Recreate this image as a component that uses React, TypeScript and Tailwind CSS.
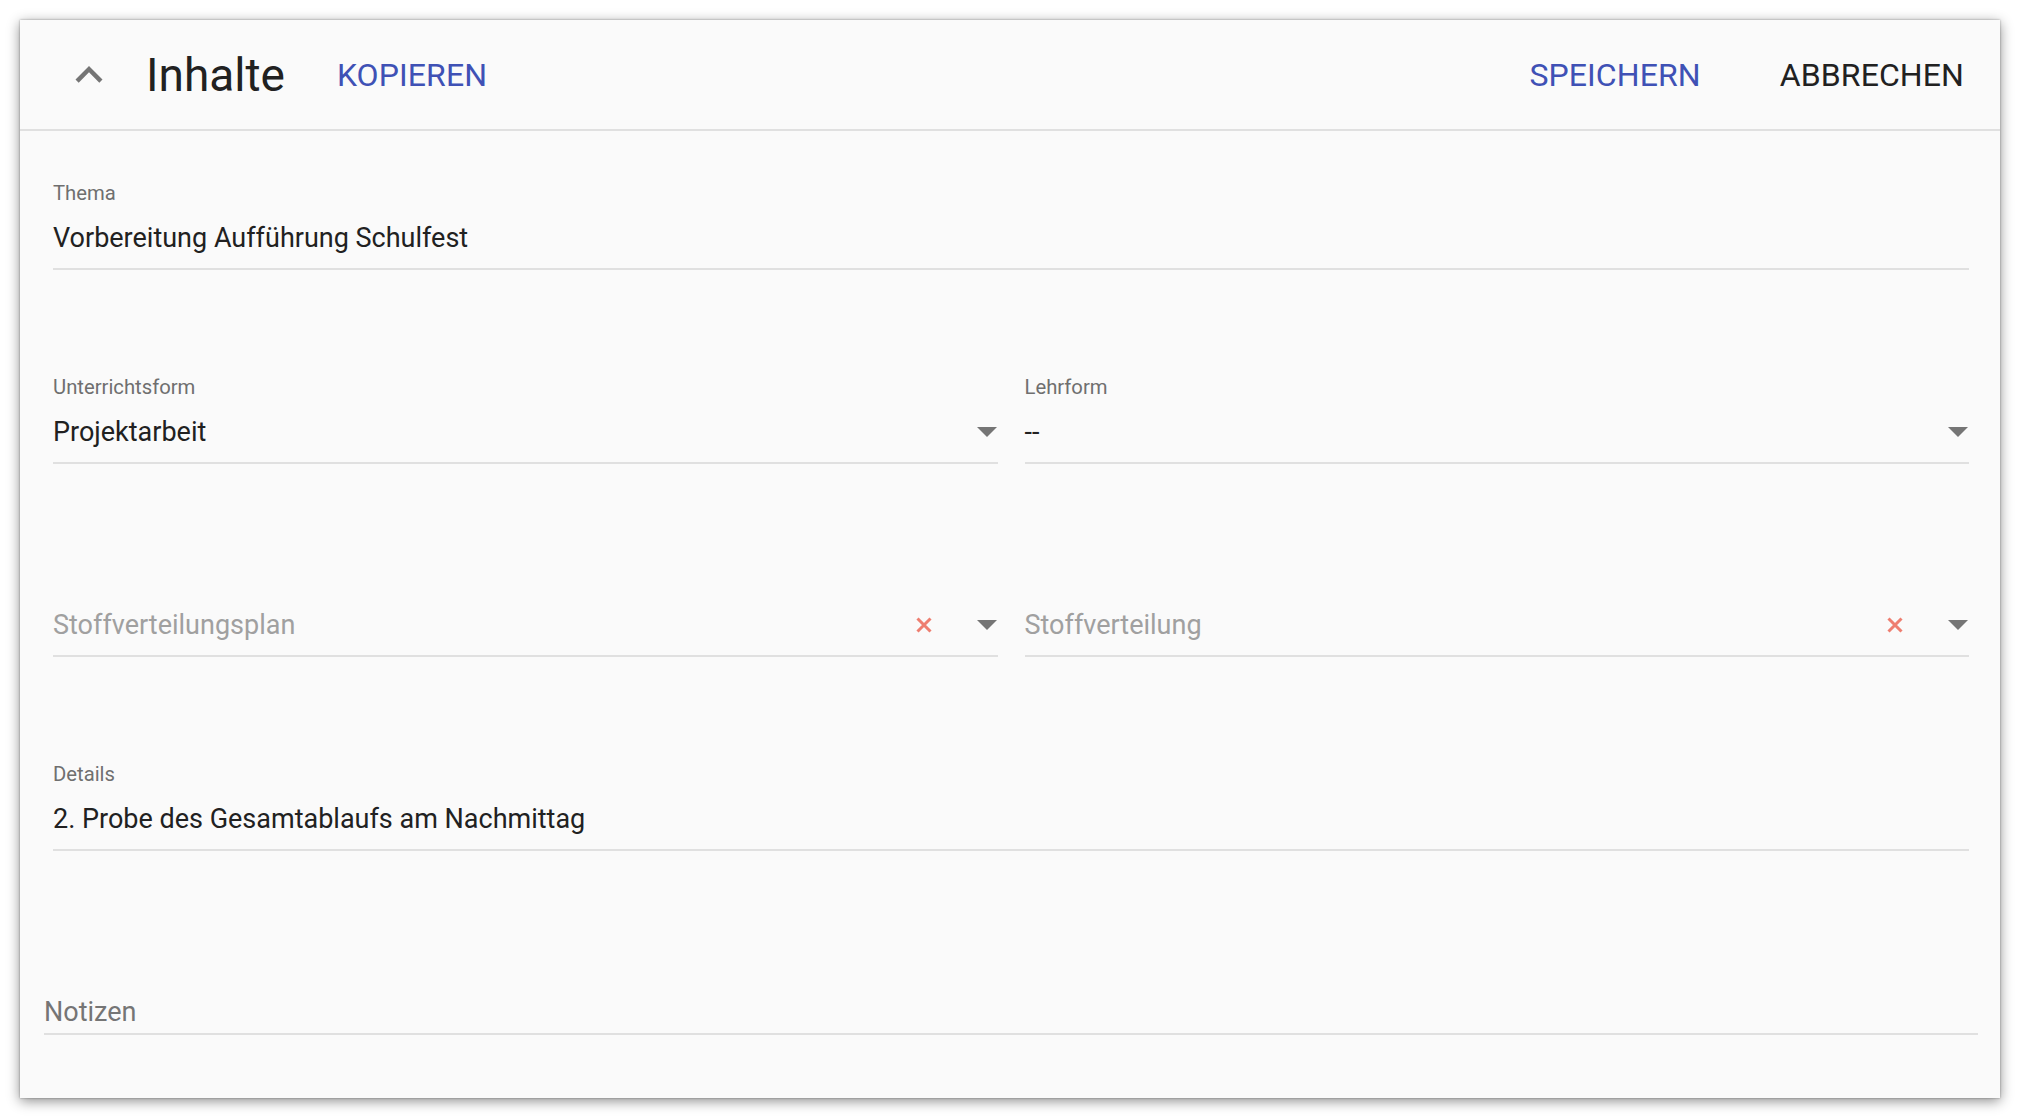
import React from "react";

const font = { fontFamily: "Roboto, 'Noto Sans', Arial, sans-serif" };

function Arrow() {
  return (
    <svg width="20" height="10" viewBox="0 0 20 10" className="shrink-0 mr-[1px]">
      <path d="M0 0 L20 0 L10 10 Z" fill="#757575" />
    </svg>
  );
}

function ClearX() {
  return (
    <svg width="16" height="16" viewBox="0 0 16 16" className="shrink-0">
      <path d="M1.5 1.5 L14.5 14.5 M14.5 1.5 L1.5 14.5" stroke="#ee7e70" strokeWidth="3" strokeLinecap="butt" />
    </svg>
  );
}

function Field({
  label,
  value,
  placeholder,
  select,
  clearable,
  className = "",
}: {
  label?: string;
  value?: string;
  placeholder?: string;
  select?: boolean;
  clearable?: boolean;
  className?: string;
}) {
  return (
    <div className={`flex flex-col min-w-0 ${className}`}>
      <div className="h-[24px] text-[20.25px] leading-[24px] text-[#6f6f6f]">{label ?? ""}</div>
      <div className="mt-[17px] h-[32px] flex items-center">
        <div
          className={`flex-1 min-w-0 text-[27px] leading-[32px] whitespace-nowrap ${
            value !== undefined ? "text-[#212121]" : "text-[#a0a0a0]"
          }`}
        >
          {value ?? placeholder}
        </div>
        {clearable && (
          <div className="mr-[45px] flex items-center">
            <ClearX />
          </div>
        )}
        {select && <Arrow />}
      </div>
      <div className="pb-[14px] border-b-2 border-[#e0e0e0]" />
    </div>
  );
}

export default function App() {
  return (
    <div className="min-h-screen w-full bg-white p-5" style={font}>
      <div className="h-[1078px] bg-[#fafafa] shadow-[0_3px_12px_rgba(0,0,0,0.45),0_0_2px_rgba(0,0,0,0.35)] flex flex-col">
        <div className="h-[111px] shrink-0 border-b-2 border-[#e0e0e0] flex items-center pl-[42px] pr-[36px]">
          <svg width="54" height="54" viewBox="0 0 24 24" className="shrink-0">
            <path d="M12 8l-6 6 1.41 1.41L12 10.83l4.59 4.58L18 14z" fill="#757575" />
          </svg>
          <div className="ml-[30px] text-[46px] leading-[54px] text-[#212121]">Inhalte</div>
          <div className="ml-[52px] text-[32px] font-normal tracking-[0.1px] text-[#3f51b5]">KOPIEREN</div>
          <div className="ml-auto text-[32px] font-normal tracking-[0.1px] text-[#3f51b5]">SPEICHERN</div>
          <div className="ml-[79px] text-[32px] font-normal tracking-[0.1px] text-[#212121]">ABBRECHEN</div>
        </div>
        <div className="flex-1 pt-[50px] px-[24px] pr-[22px] flex flex-col gap-[104.5px]">
          <div className="pl-[9px] pr-[9px]">
            <Field label="Thema" value="Vorbereitung Aufführung Schulfest" />
          </div>
          <div className="pl-[9px] pr-[9px] grid grid-cols-2 gap-[27px]">
            <Field label="Unterrichtsform" value="Projektarbeit" select />
            <Field label="Lehrform" value="--" select />
          </div>
          <div className="pl-[9px] pr-[9px] grid grid-cols-2 gap-[27px]">
            <Field placeholder="Stoffverteilungsplan" select clearable />
            <Field placeholder="Stoffverteilung" select clearable />
          </div>
          <div className="pl-[9px] pr-[9px]">
            <Field label="Details" value="2. Probe des Gesamtablaufs am Nachmittag" />
          </div>
          <div className="flex flex-col">
            <div className="h-[24px]" />
            <div className="mt-[17px] h-[32px] text-[27px] leading-[32px] text-[#757575]">Notizen</div>
            <div className="pb-[5px] border-b-2 border-[#e0e0e0]" />
          </div>
        </div>
      </div>
    </div>
  );
}
